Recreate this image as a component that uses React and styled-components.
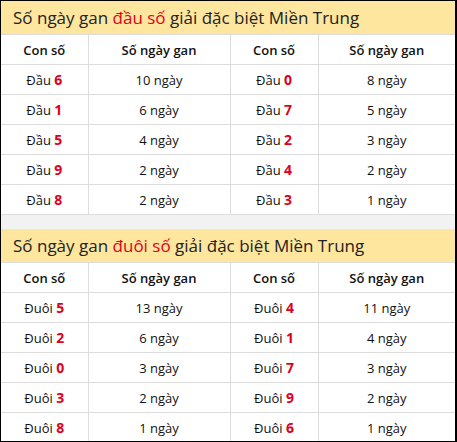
import React from 'react';
import styled, { createGlobalStyle } from 'styled-components';

const GlobalStyle = createGlobalStyle`
    html, body {
        margin: 0;
        padding: 0;
        background: #ffffff;
    }
    body {
        font-family: 'Open Sans', 'Noto Sans', sans-serif;
    }
`;

const Frame = styled.div`
    width: 457px;
    height: 442px;
    box-sizing: border-box;
    border: 1px solid #000;
    border-right-width: 2px;
    overflow: hidden;
    background: #f2f2f2;
`;

const Section = styled.section`
    background: #ffffff;
    margin-bottom: ${(p) => (p.$gap ? '14px' : '0')};
`;

const Title = styled.h2`
    margin: 0;
    height: 33px;
    padding: 0 12px;
    display: flex;
    align-items: center;
    background: #fee69f;
    font-size: 17px;
    font-weight: 500;
    color: #222;
    white-space: nowrap;
`;

const Red = styled.span`
    color: #e0001b;
`;

const Table = styled.table`
    width: 100%;
    border-collapse: collapse;
    table-layout: fixed;
    font-size: 13px;
    color: #111;
`;

const Cell = styled.td`
    height: 29px;
    padding: 0;
    text-align: center;
    border: 1px solid #dcdcdc;
    font-weight: ${(p) => (p.$head ? 600 : 400)};
    &:first-child {
        border-left: none;
    }
    &:last-child {
        border-right: none;
    }
`;

const Num = styled.b`
    color: #e0001b;
    font-weight: 700;
    font-size: 14px;
`;

const sections = [
    {
        kind: 'đầu số',
        label: 'Đầu',
        rows: [
            ['6', '10', '0', '8'],
            ['1', '6', '7', '5'],
            ['5', '4', '2', '3'],
            ['9', '2', '4', '2'],
            ['8', '2', '3', '1'],
        ],
    },
    {
        kind: 'đuôi số',
        label: 'Đuôi',
        rows: [
            ['5', '13', '4', '11'],
            ['2', '6', '1', '4'],
            ['0', '3', '7', '3'],
            ['3', '2', '9', '2'],
            ['8', '1', '6', '1'],
        ],
    },
];

const GanSection = ({ kind, label, rows, gap }) => (
    <Section $gap={gap}>
        <Title>
            Số ngày gan&nbsp;<Red>{kind}</Red>&nbsp;giải đặc biệt Miền Trung
        </Title>
        <Table>
            <colgroup>
                <col style={{ width: '87px' }} />
                <col style={{ width: '142px' }} />
                <col style={{ width: '88px' }} />
                <col />
            </colgroup>
            <tbody>
                <tr>
                    <Cell $head>Con số</Cell>
                    <Cell $head>Số ngày gan</Cell>
                    <Cell $head>Con số</Cell>
                    <Cell $head>Số ngày gan</Cell>
                </tr>
                {rows.map(([a, da, b, db]) => (
                    <tr key={a + b}>
                        <Cell>
                            {label} <Num>{a}</Num>
                        </Cell>
                        <Cell>{da} ngày</Cell>
                        <Cell>
                            {label} <Num>{b}</Num>
                        </Cell>
                        <Cell>{db} ngày</Cell>
                    </tr>
                ))}
            </tbody>
        </Table>
    </Section>
);

export default function App() {
    return (
        <>
            <GlobalStyle />
            <Frame>
                {sections.map((s, i) => (
                    <GanSection key={s.kind} {...s} gap={i === 0} />
                ))}
            </Frame>
        </>
    );
}
